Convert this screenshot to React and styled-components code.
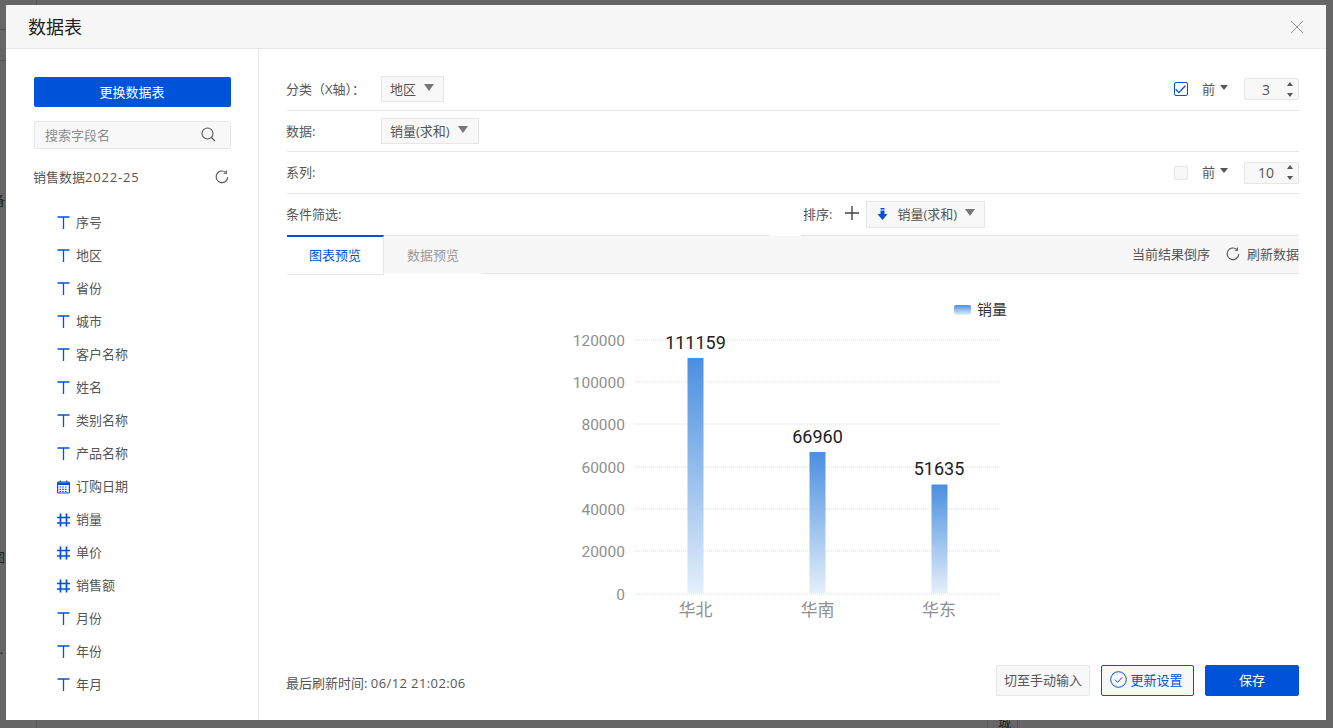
import React from "react";
import styled, { createGlobalStyle } from "styled-components";

const Global = createGlobalStyle`
  html, body { margin: 0; padding: 0; height: 728px; overflow: hidden; background: #666; }
  * { box-sizing: border-box; }
  body { font-family: "Open Sans", "Noto Sans CJK SC", sans-serif; font-size: 13px; color: #555; }
`;

const BLUE = "#0052d9";
const STACK = `"Open Sans", "Noto Sans CJK SC", sans-serif`;

const Page = styled.div`
  position: relative;
  width: 1333px;
  height: 728px;
  padding: 5px 7px 8px 6px;
  background: #666;
  overflow: hidden;
`;
const Fragment = styled.span`
  position: absolute;
  left: ${p => p.$x}px;
  top: ${p => p.$y}px;
  font-size: 13px;
  color: #222;
`;
const BackLine = styled.div`
  position: absolute;
  background: #555;
  left: ${p => p.$x}px;
  top: ${p => p.$y}px;
  width: ${p => p.$w}px;
  height: ${p => p.$h}px;
`;
const Modal = styled.div`
  position: relative;
  width: 100%;
  height: 100%;
  background: #fff;
  display: flex;
  flex-direction: column;
`;
const Header = styled.header`
  height: 44px;
  flex: none;
  background: #f7f7f7;
  border-bottom: 1px solid #e6e6e6;
  display: flex;
  align-items: center;
  justify-content: space-between;
  padding: 0 22px 0 22px;
`;
const Title = styled.h1`
  margin: 0;
  font-size: 18px;
  font-weight: 400;
  color: #222;
  line-height: 44px;
`;
const Close = styled.svg`
  width: 14px;
  height: 14px;
  display: block;
`;
const Body = styled.div`
  flex: 1;
  display: flex;
  min-height: 0;
`;
const Sidebar = styled.aside`
  width: 253px;
  flex: none;
  border-right: 1px solid #e6e6e6;
  padding: 28px 27px 0 28px;
  display: flex;
  flex-direction: column;
`;
const PrimaryWide = styled.button`
  height: 30px;
  width: 197px;
  border: 0;
  border-radius: 2px;
  background: ${BLUE};
  color: #fff;
  font: 400 13px ${STACK};
  padding: 0 1px 2px 0;
`;
const Search = styled.div`
  margin-top: 14px;
  width: 197px;
  height: 28px;
  background: #f8f8f8;
  border: 1px solid #e6e6e6;
  border-radius: 2px;
  display: flex;
  align-items: center;
  justify-content: space-between;
  padding: 0 14px 2px 10px;
  color: #8c8c8c;
`;
const DataTitle = styled.div`
  margin-top: 17px;
  margin-left: -1px;
  width: 198px;
  height: 22px;
  display: flex;
  align-items: center;
  justify-content: space-between;
  padding-right: 2px;
  color: #555;
  line-height: 22px;
`;
const Latin = styled.span`
  letter-spacing: ${p => p.$ls}px;
`;
const FieldList = styled.ul`
  list-style: none;
  margin: 19px 0 0;
  padding: 0 0 0 23px;
`;
const Field = styled.li`
  height: 33px;
  display: flex;
  align-items: center;
  gap: 6px;
  color: #555;
  line-height: 33px;
  padding-bottom: 2px;
`;
const FieldIcon = styled.svg`
  width: 13px;
  height: 14px;
  flex: none;
`;
const Main = styled.main`
  flex: 1;
  min-width: 0;
  padding: 19px 27px 24px 28px;
  display: flex;
  flex-direction: column;
`;
const Row = styled.div`
  position: relative;
  height: ${p => p.$h}px;
  flex: none;
  border-bottom: 1px solid #e6e6e6;
  display: flex;
  align-items: center;
`;
const Label = styled.span`
  width: 94px;
  flex: none;
  color: #555;
  margin-left: -1px;
  margin-right: 1px;
  padding-bottom: 2px;
`;
const Select = styled.div`
  height: ${p => p.$h || 26}px;
  display: inline-flex;
  align-items: center;
  gap: ${p => p.$gap || 8}px;
  padding: 0 ${p => p.$pr || 9}px 2px ${p => p.$pl || 8}px;
  background: #f8f8f8;
  border: 1px solid #e6e6e6;
  color: #555;
`;
const Caret = styled.i`
  display: inline-block;
  width: 0;
  height: 0;
  border-left: ${p => p.$s || 5.5}px solid transparent;
  border-right: ${p => p.$s || 5.5}px solid transparent;
  border-top: ${p => p.$s ? 5 : 7}px solid ${p => p.$c || "#777"};
  position: relative;
  top: -1px;
`;
const Spacer = styled.div`
  flex: 1;
`;
const Check = styled.span`
  width: 14px;
  height: 14px;
  border-radius: 2px;
  border: 1px solid ${p => (p.$on ? BLUE : "#e6e6e6")};
  background: ${p => (p.$on ? "#fff" : "#f8f8f8")};
  display: flex;
  align-items: center;
  justify-content: center;
`;
const Top = styled.span`
  margin-left: 14px;
  display: inline-flex;
  align-items: center;
  gap: 5px;
  color: #555;
  padding-bottom: 2px;
`;
const Spin = styled.div`
  margin-left: 16px;
  width: 55px;
  height: 22px;
  background: #f8f8f8;
  border: 1px solid #e6e6e6;
  border-radius: 2px;
  display: flex;
  align-items: center;
  font-size: 14px;
  color: #555;
  padding-right: 5px;
`;
const SpinValue = styled.span`
  flex: 1;
  text-align: center;
`;
const SpinArrows = styled.span`
  display: flex;
  flex-direction: column;
  gap: 7px;
`;
const ArrowUp = styled.i`
  display: block;
  width: 0;
  height: 0;
  border-left: 3.5px solid transparent;
  border-right: 3.5px solid transparent;
  border-bottom: 4px solid #555;
`;
const ArrowDown = styled(ArrowUp)`
  border-bottom: 0;
  border-top: 4px solid #555;
`;
const FilterPart = styled.div`
  width: 516px;
  flex: none;
  color: #555;
  margin-left: -1px;
  margin-right: 1px;
  padding-bottom: 2px;
`;
const SortLabel = styled.span`
  color: #555;
  padding-bottom: 2px;
`;
const Plus = styled.svg`
  width: 14px;
  height: 14px;
  margin: 0 7px 3px 13px;
`;
const SortName = styled.span`
  margin-left: 1px;
`;
const BorderPatch = styled.div`
  position: absolute;
  left: 483px;
  bottom: -1px;
  width: 31px;
  height: 2px;
  background: #fff;
`;
const Tabs = styled.div`
  height: 38px;
  flex: none;
  display: flex;
  align-items: flex-start;
  background: #f7f7f7;
`;
const ActiveTab = styled.div`
  width: 97px;
  height: 40px;
  margin-top: -1px;
  display: flex;
  align-items: center;
  justify-content: center;
  background: #fff;
  color: ${BLUE};
  border-top: 2px solid ${BLUE};
  border-right: 1px solid #e6e6e6;
  border-bottom: 1px solid #e6e6e6;
  padding-bottom: 2px;
  position: relative;
`;
const IdleTab = styled.div`
  width: 98px;
  height: 38px;
  flex: none;
  display: flex;
  align-items: center;
  justify-content: center;
  color: #999;
  padding-bottom: 2px;
`;
const TabActions = styled.div`
  flex: 1;
  height: 38px;
  border-bottom: 1px solid #e6e6e6;
  display: flex;
  align-items: center;
  justify-content: flex-end;
  gap: 16px;
  color: #555;
  padding-bottom: 2px;
`;
const Refresh = styled.span`
  display: inline-flex;
  align-items: center;
  gap: 7px;
`;
const ChartWrap = styled.div`
  flex: 1;
  min-height: 0;
`;
const Chart = styled.svg`
  display: block;
  width: 1012px;
  height: 370px;
`;
const Footer = styled.footer`
  height: 31px;
  flex: none;
  display: flex;
  align-items: center;
  justify-content: space-between;
`;
const Stamp = styled.span`
  color: #555;
  margin-left: -1px;
  padding-top: 4px;
`;
const Buttons = styled.div`
  display: flex;
  gap: 11px;
`;
const Btn = styled.button`
  width: ${p => p.$w}px;
  height: 31px;
  border-radius: 2px;
  font: 400 13px ${STACK};
  padding: 0 ${p => (p.$kind === "outline" ? 2 : 0)}px 2px 0;
  display: flex;
  align-items: center;
  justify-content: center;
  gap: 3px;
  background: ${p => (p.$kind === "primary" ? BLUE : "#f8f8f8")};
  color: ${p => (p.$kind === "primary" ? "#fff" : p.$kind === "outline" ? BLUE : "#555")};
  border: 1px solid ${p => (p.$kind === "plain" ? "#e6e6e6" : BLUE)};
`;

const TIcon = () => (
  <FieldIcon viewBox="0 0 13 14" fill="none" stroke={BLUE} strokeWidth="1.3">
    <path d="M0.5 1h12M6.5 1v12" />
  </FieldIcon>
);
const HashIcon = () => (
  <FieldIcon viewBox="0 0 13 14" fill="none" stroke={BLUE} strokeWidth="1.7">
    <path d="M0 4.5h13M0 10h13M3.5 0.5v13M9.5 0.5v13" />
  </FieldIcon>
);
const DateIcon = () => (
  <FieldIcon viewBox="0 0 13 14" fill="none">
    <rect x="0.6" y="2" width="11.8" height="11" rx="1" stroke={BLUE} strokeWidth="1.2" />
    <path d="M0.6 2.5h11.8v2.5H0.6z" fill={BLUE} />
    <path d="M3.3 0.5v2M9.7 0.5v2" stroke={BLUE} strokeWidth="1.2" />
    <path d="M2.5 7h8M2.5 9.3h8M2.5 11.5h8" stroke={BLUE} strokeWidth="1.2" strokeDasharray="1.6 1.1" />
  </FieldIcon>
);
const RefreshIcon = ({ size = 14, color = "#555" }) => (
  <svg width={size} height={size} viewBox="0 0 14 14" fill="none" stroke={color} strokeWidth="1.1">
    <path d="M10.8 2.4A5.8 5.8 0 1 0 12.8 7" />
    <path d="M11.4 0.6v2.6H8.8" />
  </svg>
);

const fields = [
  ["序号", "t"], ["地区", "t"], ["省份", "t"], ["城市", "t"], ["客户名称", "t"],
  ["姓名", "t"], ["类别名称", "t"], ["产品名称", "t"], ["订购日期", "d"], ["销量", "n"],
  ["单价", "n"], ["销售额", "n"], ["月份", "t"], ["年份", "t"], ["年月", "t"],
];
const icons = { t: TIcon, d: DateIcon, n: HashIcon };

const OX = 287, OY = 274;
const ticks = [["120000", 340], ["100000", 382], ["80000", 424], ["60000", 467], ["40000", 509], ["20000", 551], ["0", 594]];
const bars = [
  { x: 687.5, top: 358, v: "111159", c: "华北", ly: 349, cx: 695.5 },
  { x: 809.5, top: 452, v: "66960", c: "华南", ly: 443, cx: 817.5 },
  { x: 931.5, top: 484.5, v: "51635", c: "华东", ly: 475, cx: 939 },
];

const BarChart = () => (
  <Chart viewBox={`${OX} ${OY} 1012 370`} fontFamily="Roboto, 'Noto Sans CJK SC', sans-serif">
    <defs>
      <linearGradient id="barFill" x1="0" y1="0" x2="0" y2="1">
        <stop offset="0" stopColor="#4a8fe0" />
        <stop offset="1" stopColor="#e4effb" />
      </linearGradient>
    </defs>
    <rect x="954" y="305" width="17" height="10" rx="2" fill="url(#barFill)" />
    <text x="977" y="315" fontSize="15" fill="#333">销量</text>
    {ticks.map(([t, y]) => (
      <g key={t}>
        <line x1="635" x2="1000" y1={y} y2={y} stroke="#ddd" strokeWidth="1" strokeDasharray="1 1" />
        <text x="625" y={y + 5.5} textAnchor="end" fontSize="15.5" fill="#8f8f8f">{t}</text>
      </g>
    ))}
    {bars.map(b => (
      <g key={b.c}>
        <rect x={b.x} y={b.top} width="16" height={593 - b.top} fill="url(#barFill)" />
        <text x={b.cx} y={b.ly} textAnchor="middle" fontSize="18" fill="#222">{b.v}</text>
        <text x={b.cx} y="616" textAnchor="middle" fontSize="17" fill="#8f8f8f">{b.c}</text>
      </g>
    ))}
  </Chart>
);

export default function App() {
  return (
    <>
      <Global />
      <Page>
        <BackLine $x={36} $y={0} $w={1} $h={5} />
        <BackLine $x={0} $y={29} $w={6} $h={1} />
        <BackLine $x={0} $y={60} $w={6} $h={1} />
        <BackLine $x={36} $y={720} $w={1} $h={8} />
        <BackLine $x={987} $y={720} $w={1} $h={8} />
        <BackLine $x={1017} $y={720} $w={1} $h={8} />
        <Fragment $x={-8} $y={190}>备</Fragment>
        <Fragment $x={-8} $y={547}>图</Fragment>
        <Fragment $x={-7} $y={640}>...</Fragment>
        <Fragment $x={998} $y={712}>城</Fragment>
        <Modal>
          <Header>
            <Title>数据表</Title>
            <Close viewBox="0 0 14 14" fill="none" stroke="#999" strokeWidth="1">
              <path d="M1 1l12 12M13 1L1 13" />
            </Close>
          </Header>
          <Body>
            <Sidebar>
              <PrimaryWide>更换数据表</PrimaryWide>
              <Search>
                <span>搜索字段名</span>
                <svg width="15" height="15" viewBox="0 0 15 15" fill="none" stroke="#555" strokeWidth="1.1">
                  <circle cx="6.5" cy="6.5" r="5.5" />
                  <path d="M10.5 10.5l3.5 3.5" />
                </svg>
              </Search>
              <DataTitle>
                <span>销售数据<Latin $ls={0.8}>2022-25</Latin></span>
                <RefreshIcon />
              </DataTitle>
              <FieldList>
                {fields.map(([name, kind]) => {
                  const Icon = icons[kind];
                  return (
                    <Field key={name}>
                      <Icon />
                      <span>{name}</span>
                    </Field>
                  );
                })}
              </FieldList>
            </Sidebar>
            <Main>
              <Row $h={43}>
                <Label>分类（X轴）：</Label>
                <Select><span>地区</span><Caret /></Select>
                <Spacer />
                <Check $on>
                  <svg width="11" height="9" viewBox="0 0 11 9" fill="none" stroke={BLUE} strokeWidth="1.3">
                    <path d="M0.7 4.2l3.2 3.4L10.3 0.8" />
                  </svg>
                </Check>
                <Top>前<Caret $s={4} $c="#555" /></Top>
                <Spin><SpinValue>3</SpinValue><SpinArrows><ArrowUp /><ArrowDown /></SpinArrows></Spin>
              </Row>
              <Row $h={41}>
                <Label>数据:</Label>
                <Select $h={26} $pr={10}><span>销量(求和)</span><Caret /></Select>
              </Row>
              <Row $h={42}>
                <Label>系列:</Label>
                <Spacer />
                <Check />
                <Top>前<Caret $s={4} $c="#555" /></Top>
                <Spin><SpinValue>10</SpinValue><SpinArrows><ArrowUp /><ArrowDown /></SpinArrows></Spin>
              </Row>
              <Row $h={42}>
                <FilterPart>条件筛选:</FilterPart>
                <SortLabel>排序:</SortLabel>
                <Plus viewBox="0 0 14 14" fill="none" stroke="#444" strokeWidth="1.4">
                  <path d="M7 0v14M0 7h14" />
                </Plus>
                <Select $h={27} $pl={10} $pr={9} $gap={8}>
                  <svg width="11" height="12" viewBox="0 0 10 12" fill={BLUE}>
                    <path d="M3 0h4v1.5H3zM3 2.5h4V6h3l-5 6-5-6h3z" />
                  </svg>
                  <SortName>销量(求和)</SortName>
                  <Caret />
                </Select>
                <BorderPatch />
              </Row>
              <Tabs>
                <ActiveTab>图表预览</ActiveTab>
                <IdleTab>数据预览</IdleTab>
                <TabActions>
                  <span>当前结果倒序</span>
                  <Refresh><RefreshIcon size={14} />刷新数据</Refresh>
                </TabActions>
              </Tabs>
              <ChartWrap><BarChart /></ChartWrap>
              <Footer>
                <Stamp>最后刷新时间: <Latin $ls={0.4}>06/12 21:02:06</Latin></Stamp>
                <Buttons>
                  <Btn $kind="plain" $w={94}>切至手动输入</Btn>
                  <Btn $kind="outline" $w={93}>
                    <svg width="17" height="17" viewBox="0 0 17 17" fill="none" stroke={BLUE} strokeWidth="1">
                      <circle cx="8.5" cy="8.5" r="7.8" />
                      <path d="M5 8.7l2.6 2.6 4.6-5" />
                    </svg>
                    更新设置
                  </Btn>
                  <Btn $kind="primary" $w={94}>保存</Btn>
                </Buttons>
              </Footer>
            </Main>
          </Body>
        </Modal>
      </Page>
    </>
  );
}
